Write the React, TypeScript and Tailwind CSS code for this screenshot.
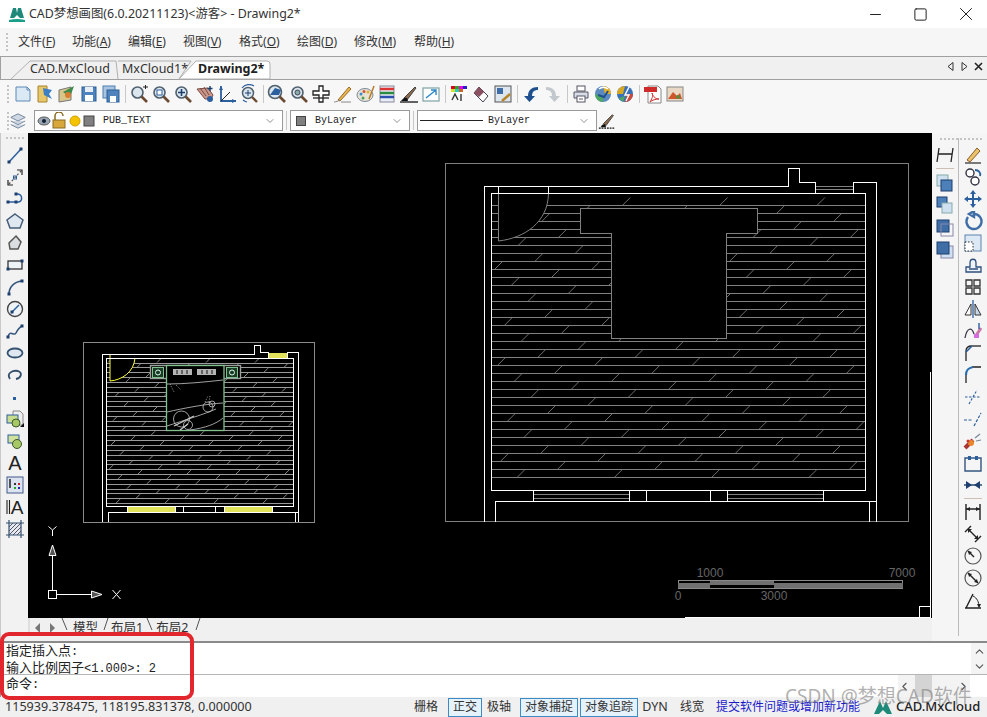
import type { ReactNode } from "react";
import { ChevronDown, ChevronUp, ChevronLeft, ChevronRight, Minus, Square, X } from "lucide-react";

const cjk = `font-['Noto_Sans','Noto_Sans_CJK_SC',sans-serif]`;
const mono = `font-['Liberation_Mono','Noto_Sans_CJK_SC',monospace]`;

const B = "#2c5f9e";
const D = "#1d3f6e";

const Ico = ({ children, size = 20 }: { children: ReactNode; size?: number }) => (
  <svg width={size} height={size} viewBox="0 0 20 20" fill="none" className="shrink-0">
    {children}
  </svg>
);

const Node = ({ x, y }: { x: number; y: number }) => <rect x={x - 1.5} y={y - 1.5} width="3" height="3" fill={D} />;

const Mag = ({ children, big }: { children?: ReactNode; big?: boolean }) => (
  <>
    <circle cx={big ? 8 : 8.5} cy={big ? 8 : 8.5} r={big ? 6.5 : 5.5} fill="#dbe6ee" stroke="#50606e" strokeWidth="1.6" />
    <path d="M12.5 12.5 L18 18" stroke="#6b4a32" strokeWidth="2.6" />
    {children}
  </>
);

const leftIcons: ReactNode[] = [
  <><path d="M4 17 L16 4" stroke={B} strokeWidth="1.5" /><Node x={4} y={17} /><Node x={16} y={4} /></>,
  <><path d="M4 17 L16 4" stroke="#555" strokeWidth="1.2" strokeDasharray="2 2" /><path d="M3 13v5h5M12 3h5v5" stroke="#222" strokeWidth="1.2" /><rect x="8.5" y="9" width="3" height="3" stroke={B} /></>,
  <><path d="M3 13 H13 C18 13 18 5 12 5" stroke={B} strokeWidth="1.5" /><Node x={3} y={13} /><Node x={11} y={13} /><Node x={11} y={5} /></>,
  <path d="M10 3 L18 9 L15 17 H5 L2 9 Z" fill="#dfe8f1" stroke="#465d78" strokeWidth="1.5" />,
  <path d="M11 3 L16 9 L13 16 H5 L4 10 Z" fill="#dadde2" stroke="#555" strokeWidth="1.5" />,
  <><rect x="3" y="6" width="14" height="8" fill="#eef3f8" stroke="#333" strokeWidth="1.3" /><Node x={3} y={14} /><Node x={17} y={6} /></>,
  <><path d="M4 17 C4 10 9 5 17 4" stroke="#34547c" strokeWidth="1.7" /><Node x={4} y={17} /><Node x={17} y={4} /></>,
  <><circle cx="10" cy="10" r="7.5" fill="#eef3f8" stroke="#444" strokeWidth="1.4" /><path d="M7 13 L14 6" stroke={B} strokeWidth="1.5" /><Node x={7} y={13} /></>,
  <><path d="M3 16 C5 8 9 16 11 12 S15 6 17 5" stroke="#34547c" strokeWidth="1.5" /><Node x={3} y={16} /><Node x={17} y={5} /></>,
  <ellipse cx="10" cy="10" rx="7.5" ry="4.5" fill="#dfe8f1" stroke="#33506f" strokeWidth="1.8" />,
  <path d="M5 14 C1 8 8 5 13 6 C18 8 16 13 11 14" stroke="#33506f" strokeWidth="1.8" />,
  <rect x="8" y="10" width="3" height="3" fill={B} />,
  <><path d="M8 2h7l3 3v11H8z" fill="#eee" stroke="#888" /><rect x="2" y="6" width="11" height="8" fill="#c7dc8f" stroke="#2c5f9e" /><circle cx="11" cy="14" r="4" fill="#a8c866" stroke="#3d5a2a" /><path d="M15 18 L19 18 L19 14 Z" fill="#111" /></>,
  <><rect x="3" y="4" width="11" height="8" fill="#cfe09f" stroke="#2c5f9e" /><circle cx="12" cy="13" r="4.5" fill="#a8c866" stroke="#3d5a2a" /></>,
  <text x="10" y="17" textAnchor="middle" fontSize="20" fontFamily="Liberation Sans" fill="#222">A</text>,
  <><rect x="2" y="2" width="16" height="16" fill="#dbe3f0" stroke="#44588a" /><path d="M5 4v9" stroke="#222" strokeWidth="1.5" /><rect x="9" y="8" width="2" height="2" fill="#333" /><rect x="13" y="8" width="2" height="2" fill="#c22" /><rect x="9" y="12" width="2" height="2" fill="#2a2" /><rect x="13" y="12" width="2" height="2" fill="#22a" /></>,
  <><path d="M2 3v14M4.5 3v14" stroke="#222" strokeWidth="1.1" /><text x="12" y="17" textAnchor="middle" fontSize="19" fontFamily="Liberation Sans" fill="#222">A</text></>,
  <><rect x="4" y="4" width="12" height="12" fill="#e6e9f0" /><path d="M4 8l4-4M4 12l8-8M4 16l12-12M8 16l8-8M12 16l4-4" stroke="#556" /><path d="M1 4h18M1 16h18M4 1v18M16 1v18" stroke="#33506f" strokeWidth="1.2" /></>,
];

const rightA: ReactNode[] = [
  <><rect x="2" y="1" width="11" height="11" fill="#cfe0f0" stroke="#8aa" /><rect x="6" y="6" width="11" height="11" fill="#4d7fb8" stroke={D} /></>,
  <><rect x="2" y="1" width="10" height="10" fill="#4d7fb8" stroke={D} /><rect x="7" y="7" width="10" height="10" fill="#cfe0f0" stroke="#8aa" /></>,
  <><rect x="2" y="2" width="12" height="12" fill="#3f6ea6" stroke={D} /><rect x="6" y="6" width="12" height="12" fill="none" stroke="#88a" /></>,
  <><rect x="6" y="6" width="12" height="12" fill="#cfe0f0" stroke="#88a" /><rect x="2" y="2" width="12" height="12" fill="#3f6ea6" stroke={D} /></>,
];

const rightB: ReactNode[] = [
  <><path d="M4 15 L14 3 L17 6 L7 17 Z" fill="#e9c26a" stroke="#8a5a2a" /><path d="M2 18h16" stroke="#444" strokeWidth="1.4" /></>,
  <><circle cx="7" cy="6" r="4" fill="#fff" stroke="#334" strokeWidth="1.4" /><circle cx="12" cy="14" r="4" fill="#fff" stroke="#334" strokeWidth="1.4" /><path d="M12 3c4 0 6 3 5 6" stroke={B} strokeWidth="1.8" /></>,
  <path d="M10 1l3 4h-2v4h4V7l4 3-4 3v-2h-4v4h2l-3 4-3-4h2v-4H5v2l-4-3 4-3v2h4V5H7z" fill={B} />,
  <path d="M5 6 A7.5 7.5 0 1 0 11 3 M11 0 V6 L6 3 Z" fill="none" stroke="#3f6ea6" strokeWidth="2.4" />,
  <><rect x="2" y="2" width="16" height="16" fill="#dce8f3" stroke="#5d82ad" /><rect x="2" y="9" width="8" height="9" fill="#fff" stroke="#333" strokeDasharray="1.5 1.5" /></>,
  <path d="M3 17h15v-5h-5V8c0-5-6-5-6 0v4H3z M6 14h9" fill="#eef3f8" stroke="#2c4f7c" strokeWidth="1.3" />,
  <path d="M3 3h6v6H3zM11 3h6v6h-6zM3 11h6v6H3zM11 11h6v6h-6z" stroke="#333" strokeWidth="1.3" />,
  <><path d="M10 1v18" stroke={B} strokeWidth="1.3" /><path d="M8 5 L2 16 H8Z" fill="#fff" stroke="#333" /><path d="M12 5 L18 16 H12Z" fill="#c8d8e8" stroke="#333" /></>,
  <><path d="M2 17 C4 6 9 6 11 13" stroke="#334" strokeWidth="1.3" /><path d="M12 16l6-9" stroke="#c7a" strokeWidth="3" /><rect x="11" y="13" width="5" height="4" fill="#d66adf" /><path d="M16 2v6" stroke={B} strokeWidth="1.4" /></>,
  <><path d="M3 18V8C3 4 6 3 9 3" stroke="#222" strokeWidth="1.3" fill="none" /><path d="M9 3h9" stroke="#222" strokeWidth="1.3" /><path d="M3 9L9 3" stroke={B} strokeWidth="1.6" /></>,
  <><path d="M3 18V9M9 2h9" stroke="#222" strokeWidth="1.3" /><path d="M3 10C3 5 5 3 10 2" stroke="#2c6fb0" strokeWidth="2.2" /></>,
  <path d="M2 10h16M6 17L14 3" stroke={B} strokeWidth="1.1" strokeDasharray="2.5 1.5" />,
  <path d="M1 11h8M11 17L18 4" stroke={B} strokeWidth="1.2" strokeDasharray="3 1.5" />,
  <><path d="M2 17L10 9" stroke="#a33" strokeWidth="4" /><circle cx="8" cy="12" r="3" fill="#e8862e" /><circle cx="5" cy="10" r="1.5" fill="#c33" /><path d="M12 7l5-4M13 10l5-1" stroke="#789" strokeWidth="1.2" /></>,
  <><path d="M2 5h16v13H2z" stroke="#35557f" strokeWidth="1.4" /><rect x="5" y="3" width="3" height="4" fill={B} /><rect x="12" y="3" width="3" height="4" fill={B} /></>,
  <><path d="M1 10h18" stroke={D} strokeWidth="1.4" /><path d="M9 10L3 6v8zM11 10l6-4v8z" fill={D} /></>,
  null,
  <><path d="M3 2v16M17 2v16M3 7h14" stroke="#222" strokeWidth="1.4" /><path d="M3 7l4-2v4zM17 7l-4-2v4z" fill="#222" /></>,
  <><path d="M2 8L8 2M12 18L18 12M5 5L15 15" stroke="#222" strokeWidth="1.4" /><path d="M5 5l4 0-4 4zM15 15l-4 0 4-4z" fill="#222" /></>,
  <><circle cx="10" cy="10" r="8" stroke="#555" strokeWidth="1.2" /><path d="M5 5L11 11" stroke="#222" strokeWidth="1.4" /><path d="M5 5l4 1-3 3z" fill="#222" /></>,
  <><circle cx="10" cy="10" r="8" stroke="#555" strokeWidth="1.2" /><path d="M5 5L15 15" stroke="#222" strokeWidth="1.4" /><path d="M5 5l4 1-3 3zM15 15l-4-1 3-3z" fill="#222" /></>,
  <><path d="M2 18h16M3 18L10 4" stroke="#222" strokeWidth="1.4" /><path d="M10 6c4 2 6 6 6 11" stroke="#222" /><path d="M16 18l-2-4h4z" fill="#222" /></>,
];

const topGroups: ReactNode[][] = [
  [
    <><path d="M3 3h11l3 3v11H3z" fill="#dbe9f4" stroke="#5c89b8" /><path d="M14 3v3h3" stroke="#5c89b8" /></>,
    <><path d="M3 2h9v16H3z" fill="#e9c76b" stroke="#a8842e" /><path d="M8 4l9 2-3 4 3 5-8-4z" fill="#3f7fc4" /></>,
    <><path d="M2 6l12-3v13L2 18z" fill="#d9c68a" stroke="#777" /><path d="M6 8l11-6-4 11z" fill="#3d8a4d" /><circle cx="11" cy="11" r="3" fill="#d97d2e" /></>,
    <><rect x="3" y="3" width="14" height="14" fill="#4f83bd" stroke="#2d5f96" /><rect x="6" y="3" width="8" height="5" fill="#e8eef5" /><rect x="6" y="11" width="8" height="6" fill="#fff" /></>,
    <><rect x="2" y="2" width="12" height="12" fill="#a9c4e0" stroke="#4f7fb0" /><rect x="6" y="6" width="12" height="12" fill="#4f83bd" stroke="#2d5f96" /><rect x="9" y="12" width="6" height="6" fill="#fff" /></>,
  ],
  [
    <Mag><path d="M14 3h5M16.5 1v4" stroke="#222" strokeWidth="1" /></Mag>,
    <Mag><rect x="6" y="6" width="5" height="5" stroke={B} fill="#fff" /></Mag>,
    <Mag><path d="M8.5 5v7M5 8.5h7" stroke={D} strokeWidth="1.6" /></Mag>,
    <><path d="M2 5l8 10h6l2-4-5-7z" fill="#c9968a" stroke="#7a4a44" /><path d="M5 4l6 8M9 3l5 8" stroke="#7a4a44" /><circle cx="15" cy="15" r="3" fill="#2c5f9e" /><path d="M15 2v5M12.5 4.5h5" stroke={D} strokeWidth="1.4" /></>,
    <><path d="M4 2v15h15" stroke={B} strokeWidth="1.8" /><path d="M4 17L13 8" stroke="#222" /><path d="M4 2l-2 4h4zM19 17l-4-2v4z" fill={B} /></>,
    <><circle cx="9" cy="9" r="5.5" fill="#dbe6ee" stroke="#50606e" strokeWidth="1.5" /><path d="M9 6v6M6 9h6" stroke={D} /><path d="M3 4a9 9 0 0 1 12-2M4 16a9 9 0 0 0 4 2" stroke={B} strokeWidth="1.2" /><path d="M13 13l5 5" stroke="#6b4a32" strokeWidth="2.4" /></>,
  ],
  [
    <Mag big><path d="M3 11L8 4l6 2-2 5z" fill="#2c5f9e" /></Mag>,
    <Mag><circle cx="8.5" cy="8.5" r="2.5" fill="#8aa" stroke="#445" /></Mag>,
    <><path d="M8 2h4v5h6v4h-6v7H8v-7H2V7h6z" fill="#fff" stroke="#222" strokeWidth="1.3" /><path d="M2 14h16" stroke="#222" strokeWidth="1.3" /></>,
    <><path d="M5 16L16 3l2 2L7 17z" fill="#e8b84f" stroke="#9a6a25" /><path d="M1 18c2 0 4-1 6-2M8 18h10" stroke="#888" /></>,
    <><ellipse cx="10" cy="11" rx="8" ry="6.5" fill="#e8e2d2" stroke="#7a8a9a" /><circle cx="6" cy="10" r="1.5" fill="#3a8ad0" /><circle cx="9" cy="7.5" r="1.5" fill="#d0503a" /><circle cx="13" cy="8" r="1.5" fill="#e0b030" /><circle cx="8" cy="14" r="1.5" fill="#50a050" /><path d="M14 15L19 2" stroke="#b87a2a" strokeWidth="1.5" /></>,
    <><rect x="3" y="2" width="14" height="16" fill="#e8eef5" stroke="#889" /><path d="M3 5h14" stroke="#d33" strokeWidth="2.5" /><path d="M3 9h14" stroke="#2a8a3f" strokeWidth="2.5" /><path d="M3 13h14" stroke="#2c4fb0" strokeWidth="2.5" /></>,
    <><path d="M5 14L16 3l1 1L8 16z" fill="#8a6a4a" stroke="#444" /><path d="M2 17c2-3 4-4 6-3l1 3z" fill="#111" /><path d="M1 18h18" stroke="#111" strokeWidth="1.3" /></>,
    <><rect x="2" y="4" width="16" height="13" fill="#fff" stroke="#8aa" strokeWidth="1.3" /><path d="M5 14L15 6M10 6h5v5" stroke="#2a86c8" strokeWidth="1.4" /></>,
  ],
  [
    <><path d="M2 2h16v9H2z" fill="#fff" /><rect x="2" y="2" width="4" height="3" fill="#d02" /><rect x="6" y="2" width="4" height="3" fill="#2a2" /><rect x="10" y="2" width="4" height="3" fill="#e0d" /><rect x="14" y="2" width="4" height="3" fill="#22c" /><rect x="2" y="5" width="4" height="3" fill="#dd2" /><rect x="6" y="5" width="4" height="3" fill="#2cc" /><rect x="10" y="5" width="4" height="3" fill="#c62" /><path d="M3 16l3-6 3 6M12 10v7" stroke="#333" strokeWidth="1.4" /></>,
    <><path d="M3 9l5-6 9 9-5 6z" fill="#fff" stroke="#445" /><path d="M3 9l5-6 5 5-5 5z" fill="#8a5060" /></>,
    <><rect x="2" y="2" width="16" height="16" fill="#dde5ee" stroke="#555" /><rect x="4" y="4" width="6" height="6" fill="#3f6ea6" /><path d="M9 17l8-7" stroke="#b8862a" strokeWidth="2.5" /></>,
  ],
  [
    <path d="M17 3C11 3 7 6 7 12H3l5.5 6L14 12h-3c0-4 2-6 6-6z" fill="#1e4f8f" />,
    <path d="M3 3c6 0 10 3 10 9h4l-5.5 6L6 12h3c0-4-2-6-6-6z" fill="#c2c8cd" />,
  ],
  [
    <><rect x="6" y="2" width="8" height="5" fill="#fff" stroke="#556" /><path d="M3 8h14v6H3z" fill="#d8dde6" stroke="#556" /><rect x="6" y="12" width="8" height="6" fill="#fff" stroke="#556" /><path d="M8 15h4" stroke="#556" /></>,
    <><circle cx="10" cy="10" r="8" fill="#5a8ac0" /><path d="M10 2a8 8 0 0 1 8 8h-6z" fill="#e8b020" /><path d="M2 10a8 8 0 0 0 8 8v-6z" fill="#50a860" /><path d="M15 5a7 7 0 0 0-9 0" stroke="#fff" strokeWidth="1.6" /><path d="M5 11l6 2 4-6" stroke="#1e4f8f" strokeWidth="2" /></>,
    <><circle cx="10" cy="10" r="8" fill="#3a70b8" /><path d="M2 10a8 8 0 0 1 8-8l-2 8z" fill="#d8a820" /><path d="M18 10a8 8 0 0 1-8 8l2-8z" fill="#c84a3a" /><path d="M4 14l6-2-2 6z" fill="#50a860" /><path d="M14 3l-4 8h4l-3 6" stroke="#fff" strokeWidth="1.4" /></>,
  ],
  [
    <><path d="M5 2h10l3 3v14H5z" fill="#fff" stroke="#888" /><rect x="1" y="3" width="13" height="5" fill="#d02a2a" /><path d="M7 18c3-5 3-7 2-9 1 4 4 6 7 6-3 0-7 1-9 3z" stroke="#d02a2a" /></>,
    <><rect x="2" y="3" width="16" height="14" fill="#e9d9c4" stroke="#888" /><path d="M3 15l5-7 4 4 3-3 2 6z" fill="#d0552a" /><circle cx="13" cy="13" r="2" fill="#5a8a3a" /></>,
  ],
];

const Grip = () => <div className="w-[2px] h-[18px] border-l-2 border-dotted border-[#c4c4c4] shrink-0" />;
const Sep = () => <div className="w-[1px] h-[18px] bg-[#c8c8c8] mx-[2.5px] shrink-0" />;

const Combo = ({ width, children }: { width: string; children: ReactNode }) => (
  <div className={`${width} h-[21px] bg-white border border-[#9a9a9a] flex items-center relative shrink-0`}>
    {children}
    <ChevronDown className="absolute right-[6px] top-[4px] text-[#555]" size={12} strokeWidth={1.3} />
  </div>
);

const menus = [
  { label: "文件", k: "F", w: "w-[54px]" },
  { label: "功能", k: "A", w: "w-[56px]" },
  { label: "编辑", k: "E", w: "w-[55px]" },
  { label: "视图", k: "V", w: "w-[56px]" },
  { label: "格式", k: "O", w: "w-[58px]" },
  { label: "绘图", k: "D", w: "w-[57px]" },
  { label: "修改", k: "M", w: "w-[60px]" },
  { label: "帮助", k: "H", w: "w-[50px]" },
];

const range = (n: number) => Array.from({ length: n }, (_, i) => i);

const BigPlan = () => {
  const rows = range(35).map((k) => 205.5 + k * 8);
  const ticks: string[] = [];
  rows.forEach((y, k) => {
    const first = 492 + (((33 + k * 57) % 97.3) + 97.3) % 97.3;
    for (let x = first; x < 858; x += 97.3) ticks.push(`M${x.toFixed(1)} ${y}L${(x + 8).toFixed(1)} ${y - 8}`);
  });
  return (
    <g>
      <path d={ticks.join("")} stroke="#6e6e6e" />
      <g shapeRendering="crispEdges" stroke="#808080">
        {rows.map((y) => <path key={y} d={`M492 ${y}H865`} />)}
        <rect x="445.5" y="163.5" width="463" height="358" fill="none" />
        <path d="M580.5 208.5H757.5V233.5H726.5V338.5H611.5V233.5H580.5Z" fill="#000" />
        <path d="M816 186H853M816 189.5H853" />
        <path d="M534 494.5H629M534 498H629M728 494.5H823M728 498H823" />
      </g>
      <path d="M498.5 193.5V241C525 238 548 222 548.5 193.5Z" fill="#000" stroke="#808080" />
      <g shapeRendering="crispEdges" stroke="#fff" fill="none">
        <path d="M484.5 522V186.5H788.5V168.5H799.5V182.5H815.5V193.5M853.5 193.5V182.5H876.5V522" />
        <path d="M491.5 193.5H865.5V490.5H491.5Z" />
        <path d="M495.5 522V501.5H876.5M869.5 501.5V522" />
        <path d="M498.5 186.5V193.5M548.5 186.5V193.5" />
        <path d="M533.5 490.5V501.5M629.5 490.5V501.5M646.5 490.5V501.5M710.5 490.5V501.5M727.5 490.5V501.5M823.5 490.5V501.5" />
      </g>
    </g>
  );
};

const SmallPlan = () => {
  const rows = range(30).map((k) => 362.5 + k * 4.85);
  const ticks: string[] = [];
  rows.forEach((y, k) => {
    for (let x = 108 + ((k * 29) % 49); x < 290; x += 49) ticks.push(`M${x} ${y}L${x + 4} ${y - 4}`);
  });
  return (
    <g>
      <path d={ticks.join("")} stroke="#8a8a8a" />
      <g shapeRendering="crispEdges" stroke="#9a9a9a">
        {rows.map((y) => <path key={y} d={`M107 ${Math.round(y) + 0.5}H293`} />)}
        <rect x="83.5" y="342.5" width="231" height="179.5" fill="none" stroke="#8a8a8a" />
      </g>
      <rect x="150.5" y="365.5" width="90" height="13" fill="#000" stroke="#9aa09a" strokeWidth="1.4" />
      <rect x="166.5" y="365.5" width="57.5" height="65" fill="#000" stroke="#7fc28f" strokeWidth="1.3" />
      <rect x="152.5" y="367.5" width="11" height="10" fill="#1d3a24" stroke="#7fc28f" />
      <rect x="226.5" y="367.5" width="11" height="10" fill="#1d3a24" stroke="#7fc28f" />
      <circle cx="158" cy="372.5" r="2.5" stroke="#cfe" fill="none" />
      <circle cx="232" cy="372.5" r="2.5" stroke="#cfe" fill="none" />
      <path d="M173 369h19v6h-19zM197 369h19v6h-19z" fill="#b5b5b5" />
      <path d="M177 370v4M182 370v4M187 370v4M202 370v4M207 370v4M212 370v4" stroke="#111" />
      <g stroke="#c8c8c8" fill="none" strokeWidth="0.8">
        <path d="M167 384C185 384 205 382 223 380" />
        <path d="M167 412C185 408 205 404 223 403" />
        <path d="M167 426C185 420 205 414 216 409" />
        <path d="M190 430C205 428 216 424 223 418" />
        <circle cx="181.5" cy="419" r="8" />
        <circle cx="188" cy="425" r="4.5" />
        <circle cx="208" cy="407" r="5" />
        <circle cx="212" cy="404" r="3" />
        <path d="M170 384l4 8M176 385l5 5M205 402l3-6M209 402l1-6" strokeDasharray="1 1.5" />
        <path d="M174 426L194 416M180 430l8-6" strokeWidth="1.3" />
      </g>
      <path d="M110 355V381C122 380 134 372 135 358" fill="#000" stroke="#ffff33" />
      <g shapeRendering="crispEdges" fill="#e3e35a">
        <rect x="269" y="353" width="18" height="5" />
        <rect x="128" y="507" width="47" height="5" />
        <rect x="225" y="507" width="47" height="5" />
      </g>
      <g shapeRendering="crispEdges" stroke="#fff" fill="none">
        <path d="M102.5 522V354.5H254.5V345.5H260.5V352.5H268.5V358.5M287.5 358.5V352.5H298.5V522" />
        <path d="M106.5 358.5H293.5V506.5H106.5Z" />
        <path d="M108.5 522V512.5H298.5M295.5 512.5V522" />
        <path d="M127.5 506.5V512.5M175.5 506.5V512.5M183.5 506.5V512.5M215.5 506.5V512.5M224.5 506.5V512.5M272.5 506.5V512.5" />
      </g>
    </g>
  );
};

const Canvas = () => (
  <svg viewBox="28 133 904 485" width="904" height="485" className="block bg-black">
    <SmallPlan />
    <BigPlan />
    {/* ucs */}
    <g stroke="#fff" fill="none" shapeRendering="crispEdges">
      <rect x="48.5" y="590.5" width="8" height="8" />
      <path d="M52.5 590V556M57 594.5H92" />
    </g>
    <g stroke="#fff" fill="none">
      <path d="M49 555.5L52.5 545L56 555.5ZM91.5 591L102 594.5L91.5 598Z" fill="#555" />
      <path d="M48.5 526.5L52.5 530L56.5 526.5M52.5 530V536" />
      <path d="M112.5 590L120.5 599M120.5 590L112.5 599" />
    </g>
    {/* scale bar */}
    <g shapeRendering="crispEdges">
      <rect x="678.5" y="580.5" width="224" height="8" fill="none" stroke="#8a8a8a" />
      <rect x="678" y="583" width="32" height="5" fill="#707070" />
      <rect x="710" y="581" width="64" height="3.5" fill="#707070" />
      <rect x="774" y="583" width="129" height="5" fill="#707070" />
    </g>
    <g fill="#666" fontSize="12" fontFamily="Liberation Sans" textAnchor="middle">
      <text x="710" y="577">1000</text>
      <text x="902" y="577">7000</text>
      <text x="678" y="600">0</text>
      <text x="774" y="600">3000</text>
    </g>
    <g shapeRendering="crispEdges" stroke="#fff" fill="none">
      <path d="M685 617.5H930.5V372" />
      <rect x="919.5" y="606.5" width="11" height="11" />
    </g>
  </svg>
);

const Tabs = () => (
  <div className="relative h-[24px] bg-[#f0f0f0] border-t border-b border-[#a0a0a0] border-l shrink-0 text-[12.5px] text-[#333]">
    <svg width="987" height="24" className="absolute left-0 top-[-1px]" fill="none">
      <path d="M10 23 L29 5 H115 L117 23" stroke="#b0b0b0" />
      <path d="M117 5 H190 L178 23" stroke="#b0b0b0" />
      <path d="M178 23 L195 5 H266 Q269 5 269 8 V23 Z" fill="#fff" stroke="#b0b0b0" />
    </svg>
    <div className="relative flex items-center h-full pl-[29px] pt-[3px]">
      <span className="w-[92px]">CAD.MxCloud</span>
      <span className="w-[76px]">MxCloud1*</span>
      <span className="font-bold text-[#222]">Drawing2*</span>
    </div>
    <div className="absolute right-[4px] top-[4px] flex items-center gap-[5px]">
      <svg width="9" height="11" viewBox="0 0 9 11" fill="none" stroke="#333"><path d="M7 1.5L2 5.5L7 9.5Z" /></svg>
      <svg width="9" height="11" viewBox="0 0 9 11" fill="none" stroke="#333"><path d="M2 1.5L7 5.5L2 9.5Z" /></svg>
      <svg width="9" height="9" viewBox="0 0 9 9" fill="none" stroke="#222" strokeWidth="1.6"><path d="M1 1L8 8M8 1L1 8" /></svg>
    </div>
  </div>
);

const LayoutTabs = () => (
  <div className="relative flex-1 bg-[#f0f0f0] text-[12.5px] text-[#333]">
    <svg width="180" height="23" className="absolute left-0 top-0" fill="none">
      <path d="M1 0V17" stroke="#ccc" />
      <path d="M12 5L7 10L12 15Z" fill="#777" />
      <path d="M22 5L27 10L22 15Z" fill="#777" />
      <path d="M34 0L39 12M76 12L80 0M119 0L124 12M168 12L172 0" stroke="#555" />
    </svg>
    <div className="flex pl-[45px] pt-[1px] gap-[13px] leading-[18px]">
      <span>模型</span>
      <span>布局1</span>
      <span>布局2</span>
    </div>
  </div>
);

const Btn = ({ children, on, w }: { children: ReactNode; on?: boolean; w: string }) => (
  <span className={`${w} h-[19px] flex items-center justify-center shrink-0 ${on ? "bg-[#e5f1fb] border border-[#3d8bc4]" : ""}`}>
    {children}
  </span>
);

export default function App() {
  return (
    <div className={`relative w-[987px] h-[717px] overflow-hidden flex flex-col bg-[#f0f0f0] ${cjk}`}>
      {/* title */}
      <div className="h-[28px] bg-white flex items-center shrink-0">
        <svg width="18" height="18" viewBox="0 0 18 18" className="ml-[8px] shrink-0">
          <path d="M2 13 L5 3 L8 3 L9 8 L10 3 L13 3 L16 13 L12 13 L9 10 L6 13 Z" fill="#1f8a7a" />
          <path d="M1 15 Q9 13 17 15 L17 17 L1 17 Z" fill="#1aa08a" />
        </svg>
        <span className="ml-[3px] text-[12.4px] text-[#333] whitespace-nowrap">CAD梦想画图(6.0.20211123)&lt;游客&gt; - Drawing2*</span>
        <div className="ml-auto flex items-center text-[#222]">
          <Minus size={17} strokeWidth={1} absoluteStrokeWidth className="mr-[29px]" />
          <Square size={15} strokeWidth={1} absoluteStrokeWidth className="mr-[27px]" />
          <X size={22} strokeWidth={1} absoluteStrokeWidth className="mr-[10px]" />
        </div>
      </div>
      {/* menu */}
      <div className="h-[28px] bg-[#f6f6f6] flex items-center pl-[6px] text-[12px] text-[#333] shrink-0">
        <Grip />
        <div className="flex ml-[10px]">
          {menus.map((m) => (
            <span key={m.k} className={`${m.w} whitespace-nowrap`}>
              {m.label}(<span className="underline">{m.k}</span>)
            </span>
          ))}
        </div>
      </div>
      <Tabs />
      {/* standard toolbar */}
      <div className="h-[28px] bg-[#f7f7f7] flex items-center pl-[7px] shrink-0">
        <Grip />
        <div className="flex items-center ml-[3px]">
          {topGroups.map((group, i) => (
            <div key={i} className="flex items-center">
              {i > 0 && <Sep />}
              {group.map((icon, j) => (
                <span key={j} className="w-[22px] flex justify-center">
                  <Ico size={20}>{icon}</Ico>
                </span>
              ))}
            </div>
          ))}
        </div>
      </div>
      {/* layer toolbar */}
      <div className="h-[25px] bg-[#f7f7f7] flex items-center pl-[7px] shrink-0">
        <Grip />
        <Ico size={18}>
          <path d="M2 6l8-4 8 4-8 4zM2 10l8 4 8-4M2 14l8 4 8-4" stroke="#6d8097" fill="#cfd8e3" />
        </Ico>
        <div className="w-[7px]" />
        <Combo width="w-[249px]">
          <svg width="70" height="17" viewBox="0 0 70 17" className="ml-[1px]" fill="none">
            <ellipse cx="8" cy="9" rx="6" ry="4" fill="#9aa7b3" stroke="#555" />
            <circle cx="8" cy="9" r="2" fill="#123" />
            <rect x="17" y="8" width="12" height="8" fill="#d8a93a" stroke="#8a6a20" />
            <path d="M19 8V4a4 4 0 0 1 8 0" stroke="#8a6a20" strokeWidth="1.5" />
            <circle cx="39" cy="9" r="5" fill="#f5c400" stroke="#d8a000" />
            <rect x="48" y="4" width="10" height="10" fill="#808080" stroke="#444" />
          </svg>
          <span className={`${mono} text-[10px] text-[#222] ml-[-3px]`}>PUB_TEXT</span>
        </Combo>
        <div className="w-[1px] h-[19px] bg-[#c8c8c8] mx-[3px]" />
        <Combo width="w-[120px]">
          <span className="w-[10px] h-[10px] bg-[#808080] border border-[#444] ml-[5px]" />
          <span className={`${mono} text-[10px] text-[#222] ml-[9px]`}>ByLayer</span>
        </Combo>
        <div className="w-[1px] h-[19px] bg-[#c8c8c8] mx-[3px]" />
        <Combo width="w-[180px]">
          <span className="w-[63px] h-[1px] bg-[#222] ml-[2px]" />
          <span className={`${mono} text-[10px] text-[#222] ml-[5px]`}>ByLayer</span>
        </Combo>
        <span className="ml-[1px]">
          <Ico size={18}>
            <path d="M6 13L16 3l1 1L9 15z" fill="#8a6a4a" stroke="#444" />
            <path d="M3 17c1-3 3-4 5-3l1 3z" fill="#111" />
            <path d="M1 18h18" stroke="#111" strokeWidth="1.4" strokeDasharray="2 1" />
          </Ico>
        </span>
      </div>
      {/* workspace */}
      <div className="h-[508px] flex shrink-0">
        <div className="w-[28px] bg-[#f2f2f2] border-l border-[#c8c8c8] flex flex-col items-center pt-[4px] shrink-0">
          <div className="w-[18px] h-[2px] border-t-2 border-dotted border-[#c4c4c4] mb-[5px]" />
          {leftIcons.map((icon, i) => (
            <span key={i} className="h-[22px] flex items-center">
              <Ico size={20}>{icon}</Ico>
            </span>
          ))}
        </div>
        <div className="flex-1 flex flex-col min-w-0">
          <Canvas />
          <LayoutTabs />
        </div>
        <div className="w-[55px] bg-[#f5f5f5] flex pt-[5px] relative shrink-0">
          <div className="absolute left-[8px] top-[5px] w-[42px] h-[2px] border-t-2 border-dotted border-[#c4c4c4]" />
          <div className="w-[27px] pt-[6px] flex flex-col items-center border-r border-[#bbb] h-[498px]">
            <span className="h-[22px] flex items-center">
              <Ico size={20}><path d="M4 3L2 17M18 3L16 17M3 9h14" stroke="#222" strokeWidth="1.3" /></Ico>
            </span>
            <div className="w-[18px] h-[1px] bg-[#cdbfb4] mt-[2px] mb-[4px]" />
            {rightA.map((icon, i) => (
              <span key={i} className="h-[22px] flex items-center">
                <Ico size={20}>{icon}</Ico>
              </span>
            ))}
          </div>
          <div className="flex-1 pt-[6px] flex flex-col items-center">
            {rightB.map((icon, i) =>
              icon ? (
                <span key={i} className="h-[22px] flex items-center">
                  <Ico size={20}>{icon}</Ico>
                </span>
              ) : (
                <div key={i} className="w-[18px] h-[1px] bg-[#cdbfb4] my-[2px]" />
              ),
            )}
          </div>
        </div>
      </div>
      {/* command line */}
      <div className="h-[56px] bg-white border-t-2 border-[#8a8a8a] border-l border-l-[#999] flex flex-col shrink-0 text-[#222]">
        <div className="h-[32px] flex border-b border-[#b5b5b5]">
          <div className="flex-1 pl-[5px] text-[13px] leading-[17px] -mt-[1px]">
            <div className="h-[17px]">
              指定插入点<span className={`${mono} text-[12px]`}>:</span>
            </div>
            <div className="h-[17px]">
              输入比例因子<span className={`${mono} text-[12px]`}>&lt;1.000&gt;: 2</span>
            </div>
          </div>
          <div className="w-[16px] bg-[#f4f4f4] flex flex-col items-center justify-center gap-[2px] text-[#555]">
            <ChevronUp size={13} />
            <ChevronDown size={13} />
          </div>
        </div>
        <div className="flex-1 flex">
          <div className="flex-1 pl-[5px] text-[13px] leading-[17px]">
            命令<span className={`${mono} text-[12px]`}>:</span>
          </div>
          <div className="w-[72px] bg-[#f3f3f3] flex items-center justify-between text-[#555] mr-[17px] relative">
            <ChevronLeft size={13} />
            <span className="absolute left-[17px] top-0 w-[17px] h-full bg-[#d4d4d4]" />
            <ChevronRight size={13} />
          </div>
        </div>
      </div>
      {/* status */}
      <div className="h-[20px] bg-[#f0f0f0] flex items-center text-[12px] text-[#333] shrink-0 whitespace-nowrap">
        <span className="pl-[5px] text-[12.6px]">115939.378475, 118195.831378, 0.000000</span>
        <div className="flex items-center ml-auto">
          <Btn w="w-[34px]">栅格</Btn>
          <span className="w-[5px]" />
          <Btn w="w-[34px]" on>正交</Btn>
          <Btn w="w-[34px]">极轴</Btn>
          <span className="w-[4px]" />
          <Btn w="w-[58px]" on>对象捕捉</Btn>
          <span className="w-[2px]" />
          <Btn w="w-[58px]" on>对象追踪</Btn>
          <span className="w-[4px]" />
          <Btn w="w-[26px]"><span className="text-[12.5px]">DYN</span></Btn>
          <span className="w-[12px]" />
          <Btn w="w-[24px]">线宽</Btn>
          <span className="ml-[12px] w-[144px] text-[#1a1acc]">提交软件问题或增加新功能</span>
          <svg width="20" height="16" viewBox="0 0 20 16" className="ml-[13px]">
            <path d="M1 15L7 2L10 9L13 2L19 15H14L10 11L6 15Z" fill="#1f8a7a" />
          </svg>
          <span className="ml-[3px] mr-[9px] w-[82px] text-[13px] font-medium text-[#222]">CAD.MxCloud</span>
        </div>
      </div>
      {/* annotation */}
      <div className="absolute left-0 top-[632px] w-[194px] h-[68px] border-[4px] border-[#e2262d] rounded-[9px]" />
      <div className="absolute left-[785px] top-[682px] text-[19px] text-[#7c7c7c]/60 whitespace-nowrap">CSDN @梦想CAD软件</div>
    </div>
  );
}
